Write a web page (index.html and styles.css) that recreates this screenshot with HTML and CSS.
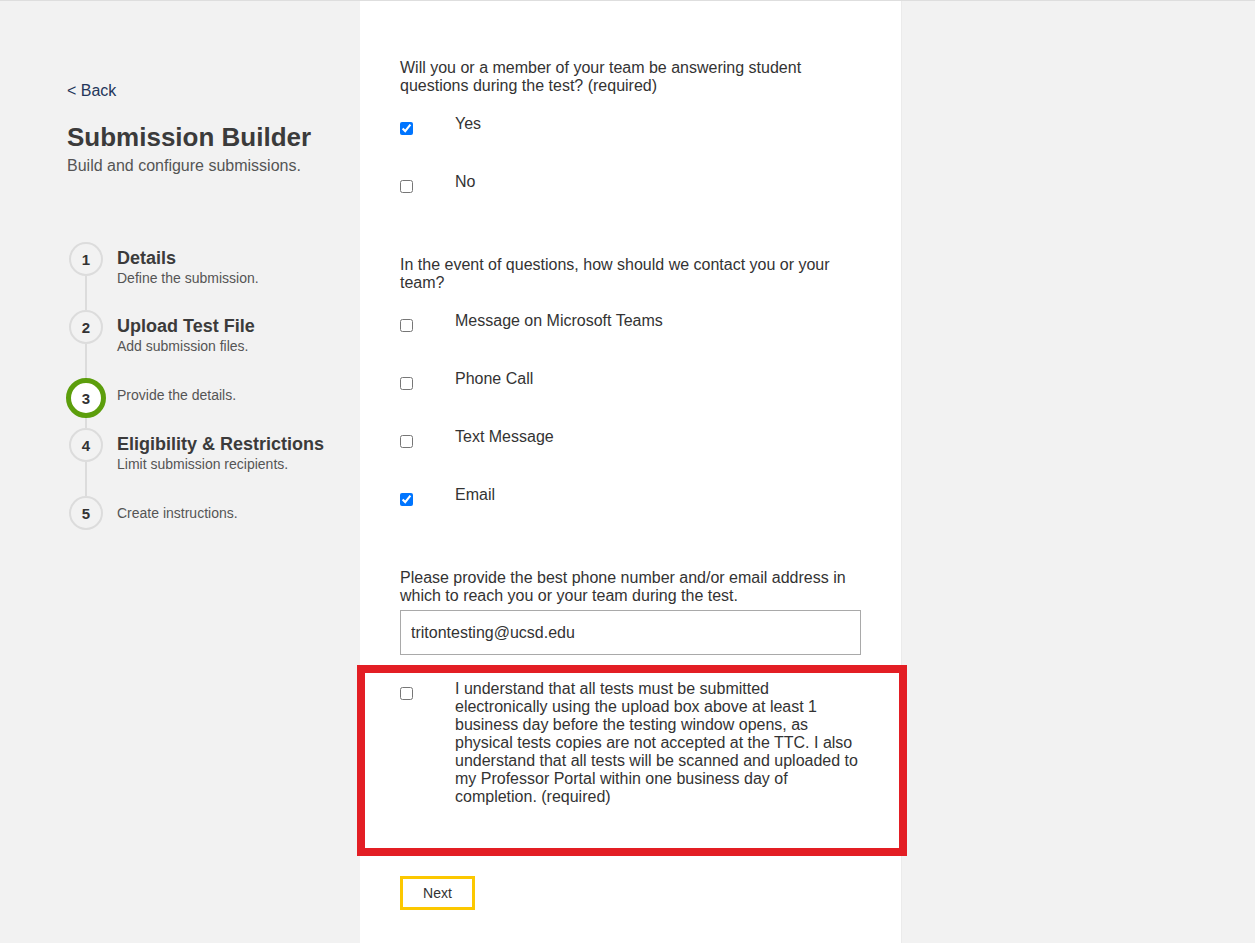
FILE: index.html
```html
<!DOCTYPE html>
<html lang="en">
<head>
  <meta charset="UTF-8">
  <title>Submission Builder</title>
  <link rel="stylesheet" href="styles.css">
</head>
<body>
  <div class="page">
    <aside class="sidebar">
      <a class="back-link" href="#">&lt; Back</a>
      <h1>Submission Builder</h1>
      <p class="subtitle">Build and configure submissions.</p>

      <ol class="steps">
        <li class="step">
          <div class="step-rail"><span class="step-num">1</span><span class="rail-line"></span></div>
          <div class="step-text">
            <div class="step-title">Details</div>
            <div class="step-desc">Define the submission.</div>
          </div>
        </li>
        <li class="step">
          <div class="step-rail"><span class="step-num">2</span><span class="rail-line"></span></div>
          <div class="step-text">
            <div class="step-title">Upload Test File</div>
            <div class="step-desc">Add submission files.</div>
          </div>
        </li>
        <li class="step step-current">
          <div class="step-rail"><span class="step-num">3</span><span class="rail-line"></span></div>
          <div class="step-text step-text-short">
            <div class="step-desc">Provide the details.</div>
          </div>
        </li>
        <li class="step">
          <div class="step-rail"><span class="step-num">4</span><span class="rail-line"></span></div>
          <div class="step-text">
            <div class="step-title">Eligibility &amp; Restrictions</div>
            <div class="step-desc">Limit submission recipients.</div>
          </div>
        </li>
        <li class="step step-last">
          <div class="step-rail"><span class="step-num">5</span></div>
          <div class="step-text step-text-short">
            <div class="step-desc">Create instructions.</div>
          </div>
        </li>
      </ol>
    </aside>

    <main class="form-panel">
      <div class="field-group">
        <p class="question">Will you or a member of your team be answering student questions during the test? (required)</p>
        <label class="option"><input type="checkbox" checked><span>Yes</span></label>
        <label class="option"><input type="checkbox"><span>No</span></label>
      </div>

      <div class="field-group">
        <p class="question">In the event of questions, how should we contact you or your team?</p>
        <label class="option"><input type="checkbox"><span>Message on Microsoft Teams</span></label>
        <label class="option"><input type="checkbox"><span>Phone Call</span></label>
        <label class="option"><input type="checkbox"><span>Text Message</span></label>
        <label class="option"><input type="checkbox" checked><span>Email</span></label>
      </div>

      <div class="field-group">
        <label class="question question-tight" for="contact">Please provide the best phone number and/or email address in which to reach you or your team during the test.</label>
        <input class="text-input" id="contact" type="text" value="tritontesting@ucsd.edu" autocomplete="off">
      </div>

      <!-- highlighted agreement -->
      <label class="option agreement"><input type="checkbox"><span>I understand that all tests must be submitted electronically using the upload box above at least 1 business day before the testing window opens, as physical tests copies are not accepted at the TTC. I also understand that all tests will be scanned and uploaded to my Professor Portal within one business day of completion. (required)</span></label>

      <button class="next-btn" type="button">Next</button>
    </main>
  </div>
</body>
</html>
```

FILE: styles.css
```css
:root {
  --bg: #f2f2f2;
  --panel: #ffffff;
  --text: #333333;
  --muted: #555555;
  --line: #dcdcdc;
  --green: #5c9e0c;
  --red: #e31e24;
  --yellow: #fcc800;
}

body {
  margin: 0;
  background: var(--bg);
  color: var(--text);
  font-family: 'Liberation Sans', Arial, sans-serif;
  font-size: 16px;
  border-top: 1px solid #dedede;
}

.page {
  display: flex;
  min-height: calc(100vh - 1px);
}

/* sidebar */

.sidebar {
  width: 360px;
  box-sizing: border-box;
  padding: 81px 0 0 67px;
  flex: none;
}

.back-link {
  display: block;
  color: #24365a;
  text-decoration: none;
  line-height: 18px;
}

h1 {
  margin: 22px 0 0;
  font-size: 26px;
  line-height: 30px;
  color: #3b3b3b;
}

.subtitle {
  margin: 5px 0 0;
  line-height: 18px;
  color: var(--muted);
}

.steps {
  list-style: none;
  margin: 67px 0 0;
  padding: 0;
}

.step {
  display: flex;
  gap: 12px;
  height: 68px;
}

.step-current {
  height: 50px;
}

.step-last {
  height: auto;
}

.step-rail {
  width: 38px;
  flex: none;
  display: flex;
  flex-direction: column;
  align-items: center;
}

.step-num {
  flex: none;
  width: 34px;
  height: 34px;
  box-sizing: border-box;
  border: 2px solid var(--line);
  border-radius: 50%;
  display: flex;
  align-items: center;
  justify-content: center;
  font-size: 15px;
  font-weight: 700;
  color: var(--text);
}

.step-current .step-num {
  width: 40px;
  height: 40px;
  border: 5px solid var(--green);
  background: var(--panel);
}

.rail-line {
  flex: 1;
  width: 2px;
  background: var(--line);
}

.step-text {
  padding-top: 5px;
}

.step-text-short {
  padding-top: 9px;
}

.step-title {
  font-size: 18px;
  line-height: 22px;
  font-weight: 700;
  color: #3b3b3b;
}

.step-title + .step-desc {
  margin-top: 1px;
}

.step-desc {
  font-size: 14px;
  line-height: 17px;
  color: var(--muted);
}

/* form */

.form-panel {
  width: 542px;
  box-sizing: border-box;
  flex: none;
  background: var(--panel);
  padding: 58px 40px 0;
  border-right: 1px solid #ebebeb;
}

.field-group {
  margin-bottom: 25px;
}

.question {
  display: block;
  margin: 0 0 20px;
  line-height: 18px;
}

.question-tight {
  margin-bottom: 5px;
}

.option {
  display: grid;
  grid-template-columns: 55px 1fr;
  height: 58px;
  line-height: 18px;
  cursor: pointer;
}

.option input {
  width: 13px;
  height: 13px;
  margin: 7px 0 0;
}

.text-input {
  display: block;
  width: 100%;
  height: 45px;
  box-sizing: border-box;
  border: 1px solid #a9a9a9;
  padding: 0 10px;
  font-family: inherit;
  font-size: 16px;
  color: var(--text);
}

.text-input:focus {
  outline: none;
}

.agreement {
  position: relative;
  height: auto;
  margin-top: 23px;
  padding-bottom: 42px;
}

.agreement::after {
  content: '';
  position: absolute;
  top: -15px;
  left: -43px;
  right: -46px;
  bottom: -8px;
  border: 8px solid var(--red);
  pointer-events: none;
}

.next-btn {
  display: block;
  margin-top: 28px;
  width: 75px;
  height: 34px;
  box-sizing: border-box;
  background: var(--panel);
  border: 3px solid var(--yellow);
  font-family: inherit;
  font-size: 14px;
  color: var(--text);
  cursor: pointer;
}
```
